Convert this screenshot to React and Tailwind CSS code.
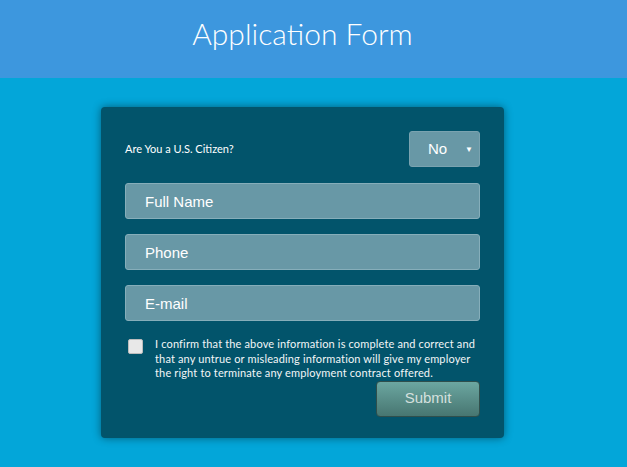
export default function App() {
  const inputCls =
    "h-[36px] w-full rounded-[3px] border border-[#86aeba] bg-[#6898a6] pl-[19px] text-[15px] text-white outline-none placeholder:text-white";
  return (
    <div className="min-h-[467px] w-full bg-[#03a6d9]" style={{ fontFamily: "'Liberation Sans', Arial, sans-serif" }}>
      <header className="flex h-[78px] items-center justify-center bg-[#3d97de] pr-[22px]">
        <h1
          className="pb-[11px] text-[30px] font-light text-white"
          style={{ fontFamily: "Lato, sans-serif" }}
        >
          Application Form
        </h1>
      </header>
      <div className="flex justify-center pt-[29px] pr-[22px]">
        <div className="w-[403px] rounded-[4px] bg-[#02546b] px-[24px] pt-[24px] pb-[21px] shadow-[0_0_8px_rgba(0,0,0,0.45)]">
          <div className="flex h-[36px] items-center justify-between">
            <span
              className="text-[11px] text-white"
              style={{ fontFamily: "Lato, sans-serif" }}
            >
              Are You a U.S. Citizen?
            </span>
            <div className="relative flex h-[36px] w-[71px] items-center rounded-[3px] border border-[#7aa3b0] bg-[#6898a6]">
              <span className="pl-[18px] text-[15px] text-white">No</span>
              <span className="absolute right-[6px] top-[12px] text-[8px] text-white">▼</span>
            </div>
          </div>
          <div className="mt-[16px] flex flex-col gap-[15px]">
            <input className={inputCls} placeholder="Full Name" />
            <input className={inputCls} placeholder="Phone" />
            <input className={inputCls} placeholder="E-mail" />
          </div>
          <div className="mt-[16px] flex gap-[12px] pl-[3px]">
            <div className="mt-[2px] h-[15px] w-[15px] shrink-0 rounded-[2px] border border-[#bcbcbc] bg-[#e8e8e8]" />
            <p
              className="text-[11px] leading-[14.5px] tracking-[0.15px] text-[#f2f6f7]"
              style={{ fontFamily: "Lato, sans-serif" }}
            >
              I confirm that the above information is complete and correct and<br />
              that any untrue or misleading information will give my employer<br />
              the right to terminate any employment contract offered.
            </p>
          </div>
          <div className="flex justify-end">
            <button className="h-[36px] w-[104px] rounded-[4px] border border-[#2f4f4c] bg-gradient-to-b from-[#6ca7a1] to-[#477671] text-[15px] text-[#d5e0de]">
              Submit
            </button>
          </div>
        </div>
      </div>
    </div>
  );
}
